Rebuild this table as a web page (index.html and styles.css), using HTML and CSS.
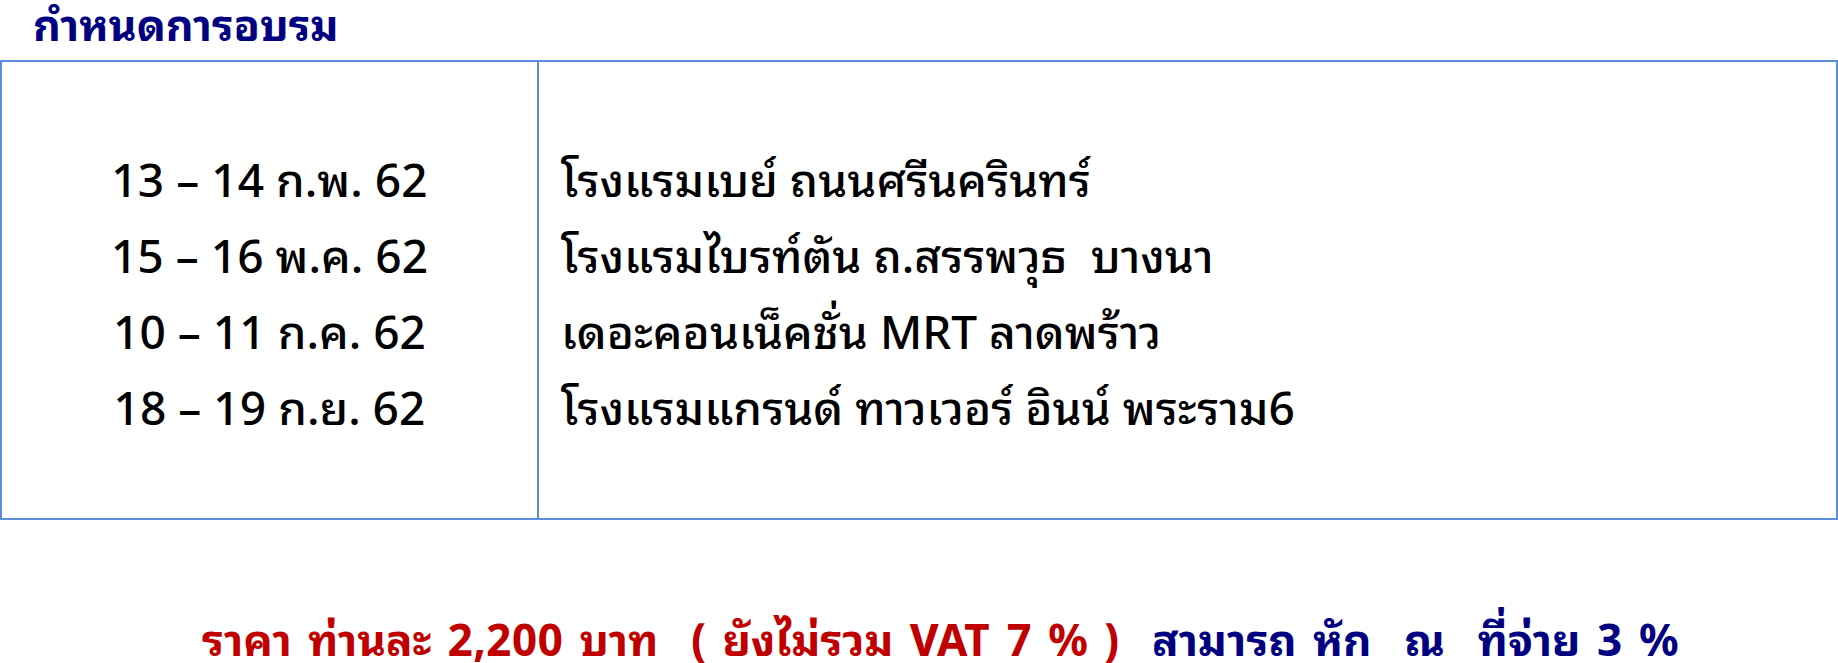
FILE: index.html
```html
<!DOCTYPE html>
<html lang="th">
<head>
<meta charset="utf-8">
<link rel="stylesheet" href="styles.css">
</head>
<body>
<h1 class="title">กำหนดการอบรม</h1>
<div class="schedule">
  <div class="dates">
    <p class="row">13 – 14 ก.พ. 62</p>
    <p class="row">15 – 16 พ.ค. 62</p>
    <p class="row">10 – 11 ก.ค. 62</p>
    <p class="row">18 – 19 ก.ย. 62</p>
  </div>
  <div class="venues">
    <p class="row">โรงแรมเบย์ ถนนศรีนครินทร์</p>
    <p class="row">โรงแรมไบรท์ตัน ถ.สรรพวุธ&nbsp; บางนา</p>
    <p class="row">เดอะคอนเน็คชั่น MRT ลาดพร้าว</p>
    <p class="row">โรงแรมแกรนด์ ทาวเวอร์ อินน์ พระราม6</p>
  </div>
</div>
<p class="price"><span class="red">ราคา ท่านละ 2,200 บาท&nbsp; ( ยังไม่รวม VAT 7 % )</span>&nbsp; <span class="navy">สามารถ หัก&nbsp; ณ&nbsp; ที่จ่าย 3 %</span></p>
</body>
</html>
```
FILE: styles.css
```css
html, body {
  margin: 0;
  padding: 0;
  background: #ffffff;
}
body {
  width: 1838px;
  font-family: "Noto Sans Thai Looped", "Noto Sans Thai", "Liberation Sans", "Noto Sans", sans-serif;
  color: #000;
}
.title {
  margin: 0;
  height: 60px;
  padding-left: 33px;
  font-size: 43px;
  line-height: 43px;
  font-weight: bold;
  color: #000080;
}
.schedule {
  display: grid;
  grid-template-columns: 537px 1fr;
  height: 456px;
  border: 2px solid #5b8ed6;
}
.dates {
  border-right: 2px solid #5b8ed6;
  display: flex;
  flex-direction: column;
  align-items: center;
  padding-top: 76px;
}
.venues {
  display: flex;
  flex-direction: column;
  padding-top: 76px;
  padding-left: 22px;
}
.row {
  margin: 0;
  font-size: 46px;
  line-height: 76px;
  font-weight: 500;
  white-space: pre;
}
.price {
  margin: 0;
  padding-left: 202px;
  padding-top: 88px;
  font-size: 44px;
  line-height: 56px;
  font-weight: bold;
  word-spacing: 5px;
  white-space: nowrap;
}
.red { color: #c00000; }
.navy { color: #000080; }
```
